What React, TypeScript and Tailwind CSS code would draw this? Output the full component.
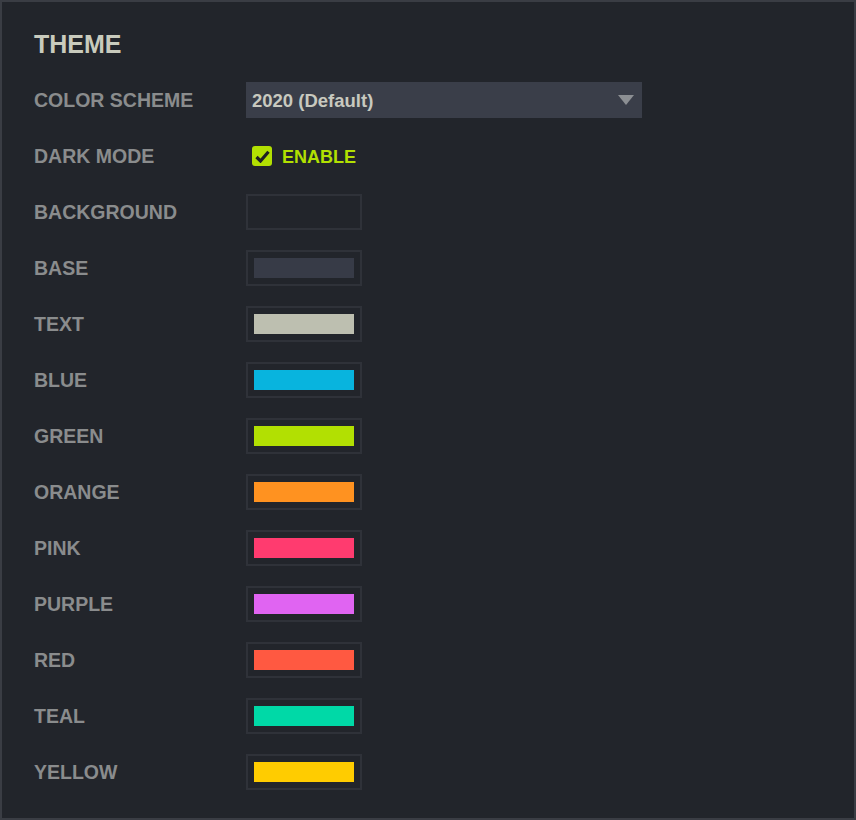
import React from 'react';

const swatches: { label: string; color: string }[] = [
  { label: 'BACKGROUND', color: 'bg-[#22252b]' },
  { label: 'BASE', color: 'bg-[#373b47]' },
  { label: 'TEXT', color: 'bg-[#bdbfb0]' },
  { label: 'BLUE', color: 'bg-[#08b4de]' },
  { label: 'GREEN', color: 'bg-[#b2e002]' },
  { label: 'ORANGE', color: 'bg-[#ff9220]' },
  { label: 'PINK', color: 'bg-[#ff3b6f]' },
  { label: 'PURPLE', color: 'bg-[#e064f2]' },
  { label: 'RED', color: 'bg-[#ff5941]' },
  { label: 'TEAL', color: 'bg-[#00d9a7]' },
  { label: 'YELLOW', color: 'bg-[#ffcc00]' },
];

function Row({ label, children }: { label: string; children: React.ReactNode }) {
  return (
    <div className="flex h-14 items-center">
      <div className="w-[212px] pt-[2px] text-[19.5px] font-bold text-[#8a8c8d]">{label}</div>
      <div className="flex items-center">{children}</div>
    </div>
  );
}

export default function App() {
  return (
    <main
      className="h-[820px] w-[856px] border-2 border-[#3a3d44] bg-[#22252b] pl-8 pt-[14px]"
      style={{ fontFamily: '"Liberation Sans", Arial, sans-serif' }}
    >
      <div className="flex h-14 items-center pt-[2px]">
        <h1 className="text-[25px] font-bold text-[#c9cbbd]">THEME</h1>
      </div>

      <Row label="COLOR SCHEME">
        <div className="flex h-9 w-[396px] items-center justify-between bg-[#3a3e49] pl-[6px] pr-2">
          <span className="pt-[2px] text-[18.5px] font-bold text-[#c8c9bf]">2020 (Default)</span>
          <svg width="16" height="10" viewBox="0 0 16 10">
            <path d="M0 0 H16 L8 10 Z" fill="#8c8f93" />
          </svg>
        </div>
      </Row>

      <Row label="DARK MODE">
        <div className="ml-[6px] flex items-center gap-[10px]">
          <div className="flex h-5 w-5 items-center justify-center rounded-[3px] bg-[#b2e002]">
            <svg width="15" height="13" viewBox="0 0 15 13">
              <path d="M1.5 7 L5.5 11 L13.5 1.8" fill="none" stroke="#1d2024" strokeWidth="3.2" />
            </svg>
          </div>
          <span className="pt-[2px] text-[18px] font-bold text-[#b2e002]">ENABLE</span>
        </div>
      </Row>

      {swatches.map((s) => (
        <Row key={s.label} label={s.label}>
          <div className="border-2 border-[#2f3239] p-[6px]">
            <div className={`h-5 w-[100px] ${s.color}`} />
          </div>
        </Row>
      ))}
    </main>
  );
}
